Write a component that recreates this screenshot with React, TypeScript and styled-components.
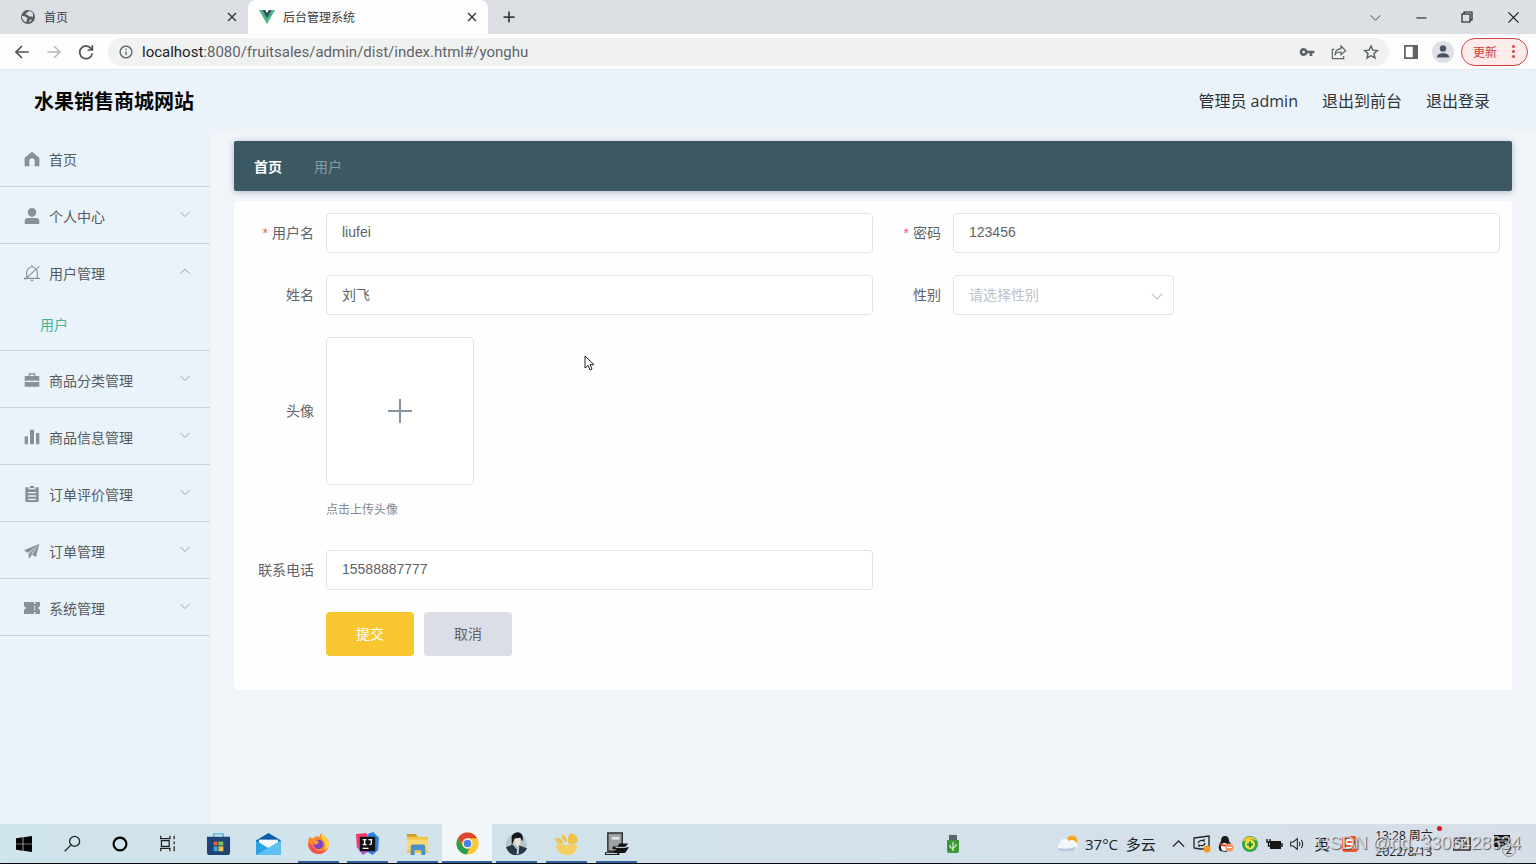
import React from "react";
import styled, { createGlobalStyle } from "styled-components";

const cjk = `"Noto Sans CJK SC", sans-serif`;

const GlobalStyle = createGlobalStyle`
  *, *::before, *::after { box-sizing: border-box; }
  body { margin: 0; font-family: "Open Sans", ${cjk}; font-size: 14px; color: #5f6368; }
  button, input, select { font: inherit; color: inherit; margin: 0; }
  a { color: inherit; text-decoration: none; }
  svg { display: block; flex: none; }
`;

const Page = styled.div`
  min-height: 100vh;
  display: flex;
  flex-direction: column;
  background: #f1f5fa;
`;

const IconButton = styled.button<{ $w?: number }>`
  width: ${(p) => p.$w ?? 32}px;
  height: 28px;
  padding: 0;
  border: 0;
  background: none;
  display: flex;
  align-items: center;
  justify-content: center;
  flex: none;
`;

/* ---------- browser ---------- */
const TabStrip = styled.div`
  height: 34px;
  display: flex;
  align-items: center;
  background: #dcdfe4;
  color: #3c4043;
`;

const Tab = styled.div<{ $active?: boolean }>`
  width: ${(p) => (p.$active ? 240 : 248)}px;
  height: 34px;
  padding: 0 0 0 ${(p) => (p.$active ? 11 : 20)}px;
  display: flex;
  align-items: center;
  gap: 8px;
  font-size: 12px;
  border-radius: 8px 8px 0 0;
  background: ${(p) => (p.$active ? "#fdfdfe" : "transparent")};
`;

const TabTitle = styled.span`
  flex: 1;
`;

const WindowControls = styled.div`
  margin-left: auto;
  display: flex;
`;

const Toolbar = styled.div`
  height: 36px;
  padding: 0 8px 0 6px;
  display: flex;
  align-items: center;
  background: #fdfdfe;
  border-bottom: 1px solid #e6e9ec;
`;

const AddressBar = styled.div`
  flex: 1;
  height: 28px;
  margin: 0 6px;
  padding: 0 2px 0 11px;
  display: flex;
  align-items: center;
  gap: 9px;
  border-radius: 14px;
  background: #f0f2f2;
  font-size: 15px;
`;

const Url = styled.div`
  flex: 1;
  font-family: Roboto, ${cjk};
  b { font-weight: 400; color: #202124; }
`;

const AddressActions = styled.div`
  display: flex;
`;

const UpdateButton = styled.button`
  width: 67px;
  height: 28px;
  margin-left: 2px;
  padding: 0 6px 0 11px;
  display: flex;
  align-items: center;
  justify-content: space-between;
  border: 1px solid #d2443c;
  border-radius: 14px;
  background: #fbeceb;
  color: #cf3a32;
  font-size: 12px;
`;

/* ---------- application ---------- */
const Header = styled.header`
  height: 60px;
  padding: 3px 46px 0 34px;
  display: flex;
  align-items: center;
  justify-content: space-between;
  background: #ebf3fa;
  color: #2f3338;
`;

const SiteTitle = styled.h1`
  margin: 0;
  font-size: 20px;
  line-height: 28px;
  color: #060606;
`;

const HeaderLinks = styled.nav`
  display: flex;
  gap: 24px;
  font-size: 16px;
  line-height: 24px;
  padding-bottom: 2px;
`;

const Body = styled.div`
  flex: 1;
  display: flex;
`;

const Sidebar = styled.nav`
  width: 210px;
  flex: none;
  background: #eaf3fa;
  color: #555a60;
`;

const MenuGroup = styled.div`
  border-bottom: 1px solid #c8d3df;
`;

const MenuItem = styled.a`
  height: 56px;
  padding: 2px 19px 0 24px;
  display: flex;
  align-items: center;
  gap: 9px;
`;

const MenuLabel = styled.span`
  flex: 1;
`;

const MenuArrow = styled.span`
  padding-bottom: 5px;
`;

const SubItem = styled.a`
  height: 50px;
  padding: 0 0 2px 40px;
  display: flex;
  align-items: center;
  color: #42b794;
`;

const Main = styled.main`
  position: relative;
  flex: 1;
  padding: 11px 24px;
`;

const Crumbs = styled.nav`
  height: 50px;
  padding: 0 20px;
  display: flex;
  align-items: center;
  gap: 32px;
  border-radius: 2px;
  background: #3b5863;
  box-shadow: 0 1px 6px rgba(60, 60, 90, 0.35);
  color: #8c9ba4;
  a { color: #fff; font-weight: 700; }
`;

const Panel = styled.form`
  margin-top: 10px;
  padding: 12px 12px 34px;
  border-radius: 4px;
  background: #fefefe;
  display: flex;
  flex-direction: column;
  gap: 22px;
  color: #606266;
`;

const Row = styled.div`
  display: grid;
  grid-template-columns: 1fr 1fr;
`;

const Field = styled.div`
  display: flex;
  align-items: flex-start;
`;

const Label = styled.label<{ $tall?: boolean }>`
  width: 80px;
  flex: none;
  padding-right: 12px;
  text-align: right;
  line-height: ${(p) => (p.$tall ? 148 : 40)}px;
`;

const Star = styled.span`
  margin-right: 4px;
  font-family: "Liberation Sans", sans-serif;
  color: #e5606c;
`;

const TextInput = styled.input`
  flex: 1;
  min-width: 0;
  height: 40px;
  padding: 0 15px 2px;
  border: 1px solid #dfe2e8;
  border-radius: 4px;
  background: #fff;
  outline: none;
  font-family: "Liberation Sans", ${cjk};
`;

const SelectBox = styled.div`
  position: relative;
  width: 221px;
  svg { position: absolute; right: 10px; top: 14px; pointer-events: none; }
`;

const Select = styled.select`
  width: 100%;
  height: 40px;
  padding: 0 15px 2px;
  appearance: none;
  border: 1px solid #dfe2e8;
  border-radius: 4px;
  background: #fff;
  color: #bcc1ca;
`;

const UploadButton = styled.button`
  width: 148px;
  height: 148px;
  padding: 0;
  display: flex;
  align-items: center;
  justify-content: center;
  border: 1px solid #dfe2e8;
  border-radius: 4px;
  background: #fff;
`;

const Tip = styled.div`
  margin-top: 7px;
  font-size: 12px;
  line-height: 36px;
  color: #84898f;
`;

const Actions = styled.div`
  padding-left: 80px;
  display: flex;
  gap: 10px;
`;

const ActionButton = styled.button<{ $primary?: boolean }>`
  width: 88px;
  height: 44px;
  padding: 0 0 2px;
  border: 0;
  border-radius: 4px;
  background: ${(p) => (p.$primary ? "#f9c62f" : "#dbdee6")};
  color: ${(p) => (p.$primary ? "#fff" : "#606266")};
`;

const Pointer = styled.svg`
  position: absolute;
  left: 374px;
  top: 225px;
`;

/* ---------- taskbar ---------- */
const Taskbar = styled.footer`
  position: relative;
  height: 40px;
  display: flex;
  align-items: stretch;
  border-bottom: 1px solid #0b0b0b;
  background: linear-gradient(90deg, #d0e4ec, #d3e1ea 60%, #d7dee8);
  color: #1d2227;
`;

const TaskButton = styled.button`
  width: 48px;
  padding: 0;
  border: 0;
  background: none;
  display: flex;
  align-items: center;
  justify-content: center;
`;

const Apps = styled.div`
  width: 447px;
  margin-left: 2px;
  display: flex;
`;

const AppButton = styled.button<{ $open?: boolean; $active?: boolean }>`
  flex: 1;
  padding: 0;
  border: 0;
  display: flex;
  flex-direction: column;
  align-items: center;
  justify-content: space-between;
  background: ${(p) => (p.$active ? "#f0f6fa" : "none")};
  &::before { content: ""; height: 2px; }
  &::after {
    content: "";
    height: 2px;
    width: ${(p) => (p.$active ? "100%" : "41px")};
    background: ${(p) => (p.$open || p.$active ? "#2f629f" : "transparent")};
  }
`;

const Usb = styled.div`
  margin: 0 auto;
  padding-left: 208px;
  display: flex;
  align-items: center;
`;

const Tray = styled.div`
  width: 480px;
  display: flex;
  align-items: center;
  font-size: 15px;
`;

const Weather = styled.div`
  width: 110px;
  display: flex;
  align-items: center;
  gap: 7px;
  white-space: nowrap;
`;

const TrayIcon = styled.div<{ $w?: number }>`
  width: ${(p) => p.$w ?? 24}px;
  flex: none;
  display: flex;
  justify-content: center;
`;

const Clock = styled.div`
  width: 76px;
  flex: none;
  text-align: center;
  font-size: 12px;
  line-height: 16px;
  white-space: nowrap;
`;

const RedDot = styled.i`
  position: absolute;
  right: 94px;
  top: 2px;
  width: 5px;
  height: 5px;
  border-radius: 50%;
  background: #e5121c;
`;

const Watermark = styled.div`
  position: absolute;
  right: 15px;
  top: 7px;
  font-family: "Liberation Sans", sans-serif;
  font-size: 18px;
  line-height: 24px;
  white-space: nowrap;
  color: rgba(232, 236, 241, 0.8);
  text-shadow: 1px 1px 1px rgba(60, 60, 60, 0.8);
`;

/* ---------- icons ---------- */
type IconProps = { d: string; size?: number; w?: number; color?: string; fill?: boolean; box?: number };
const Icon = ({ d, size = 16, w = 2, color = "currentColor", fill, box = 24 }: IconProps) => (
  <svg width={size} height={size} viewBox={`0 0 ${box} ${box}`} fill={fill ? color : "none"} stroke={fill ? "none" : color} strokeWidth={w} fillRule="evenodd" aria-hidden="true">
    <path d={d} />
  </svg>
);

const CLOSE = "M4 4l16 16M20 4L4 20";
const DOWN = "M3 8l9 9 9-9";
const UP = "M3 17l9-9 9 9";

const GlobeIcon = () => (
  <svg width="16" height="16" viewBox="0 0 16 16" aria-hidden="true">
    <circle cx="8" cy="8" r="7" fill="#5a5f64" />
    <path d="M9 2c-1 2-3 1-3 3 0 1 2 1 3 2s3 0 4 1V4.500C12 3 10.500 2 9 2zM2 7c2 0 4 .5 5 2s-1 2-.5 4C4 13 2 10.500 2 7zM9 13c0-1 .5-2 2-2.500l1 .5c-1 1.200-2 1.800-3 2z" fill="#dcdfe4" />
  </svg>
);

const VueIcon = () => (
  <svg width="16" height="16" viewBox="0 0 16 16" aria-hidden="true">
    <path d="M0 1h3.200L8 9.400 12.800 1H16L8 15z" fill="#42b883" />
    <path d="M3.200 1h3L8 4.200 9.800 1h3L8 9.400z" fill="#35495e" />
  </svg>
);

const PersonCircle = () => (
  <svg width="22" height="22" viewBox="0 0 22 22" aria-hidden="true">
    <circle cx="11" cy="11" r="11" fill="#dee1e8" />
    <circle cx="11" cy="7.500" r="3.200" fill="#4d5563" />
    <path d="M4.800 16.500c0-3 3-4.300 6.200-4.300s6.200 1.300 6.200 4.300z" fill="#4d5563" />
  </svg>
);

const menuIcons: Record<string, React.ReactNode> = {
  home: <Icon fill color="#8a9097" d="M12 1L1 10v13h7v-8q0-4 4-4t4 4v8h7V10z" />,
  user: <Icon fill color="#8a9097" d="M12 0a6.500 6.500 0 1 1 0 13A6.500 6.500 0 0 1 12 0zM1 24v-4q0-5 5-5h12q5 0 5 5v4z" />,
  bell: <Icon w={1.7} color="#8a9097" d="M0 20h24M4 20v-9a8 8 0 0 1 16 0v9M10 23h4M12 0v3M1 22L23 2" />,
  bag: <Icon fill color="#8a9097" d="M7 6V2h10v4h6v7H1V6zm2 0h6V4H9zM1 15h22v7H1z" />,
  bars: <Icon fill color="#8a9097" d="M1 11h5v12H1zM9 1h6v22H9zM18 6h5v17h-5z" />,
  board: <Icon fill color="#8a9097" d="M2 2h5v3h10V2h5v22H2zM9 0h6v3H9zM6 9v2h12V9zm0 5v2h12v-2zm0 5v2h12v-2z" />,
  plane: <Icon fill color="#8a9097" d="M23 1L0 11l6 4zM23 1L7 16v8l4-5zM23 1L11 17l7 4z" />,
  ticket: <Icon fill color="#8a9097" d="M0 3h15v3h2V3h7v6l-3 3 3 3v6h-7v-3h-2v3H0v-6l3-3-3-3zm15 6v2h2V9zm0 4v2h2v-2z" />,
};

const menu = [
  { icon: "home", label: "首页", leaf: true },
  { icon: "user", label: "个人中心" },
  { icon: "bell", label: "用户管理", child: "用户" },
  { icon: "bag", label: "商品分类管理" },
  { icon: "bars", label: "商品信息管理" },
  { icon: "board", label: "订单评价管理" },
  { icon: "plane", label: "订单管理" },
  { icon: "ticket", label: "系统管理" },
];

const Glyph = ({ children }: { children: React.ReactNode }) => (
  <svg width="25" height="25" viewBox="0 0 26 26" aria-hidden="true">{children}</svg>
);

const apps: { name: string; open?: boolean; active?: boolean; art: React.ReactNode }[] = [
  {
    name: "Store",
    art: (
      <>
        <path d="M8 7V3h10v4" fill="none" stroke="#4eb5e6" strokeWidth="1.500" />
        <path d="M1 6h24v16q0 3-3 3H4q-3 0-3-3z" fill="#1d4677" />
        <path d="M8 11h4v4H8z" fill="#e8603c" /><path d="M13 11h5v4h-5z" fill="#8cc152" />
        <path d="M8 16h4v5H8z" fill="#36a9e1" /><path d="M13 16h5v5h-5z" fill="#f6c445" />
      </>
    ),
  },
  {
    name: "Mail",
    art: (
      <>
        <path d="M0 10L13 2l13 8v4H0z" fill="#0e5ca8" /><path d="M3 9h20v8H3z" fill="#f4f9fd" />
        <path d="M0 10l13 8 13-8v15H0z" fill="#2ba2e6" /><path d="M0 25l26-15v15z" fill="#5cc0f2" />
      </>
    ),
  },
  {
    name: "Firefox",
    open: true,
    art: (
      <>
        <path d="M4 6l3 2c2-3 5-3 7-2 1-1 0-3 2-4 1 3 8 5 8 12A11 11 0 1 1 4 6z" fill="#fb8a2c" />
        <path d="M16 2c1 3 8 5 8 12-1 5-4 8-7 9 4-4 4-9 1-13-2-2-3-5-2-8z" fill="#ffd33e" />
        <path d="M2 13c0 6 5 11 11 11 4 0 8-2 10-6-6 5-14 4-16-3z" fill="#f4504e" />
        <circle cx="13" cy="14" r="5" fill="#7a45c4" /><path d="M8 11c3-3 6 0 5 2-2 0-2 2-4 1z" fill="#fb9a2c" />
      </>
    ),
  },
  {
    name: "IDE",
    open: true,
    art: (
      <>
        <path d="M1 3l11-1 3 12-13 4z" fill="#ec3d70" /><path d="M13 3l6-2 6 6-1 13-6 5-6-4z" fill="#2f82e0" />
        <path d="M2 17l8-4 5 8-7 4z" fill="#b05ad0" /><path d="M5 6h16v15H5z" fill="#111" />
        <path d="M8 9h4M10 9v5M8 14h4M14 9h4M17 9v4q0 1-2 1M8 18h6" stroke="#fff" strokeWidth="1.400" fill="none" />
      </>
    ),
  },
  {
    name: "Files",
    open: true,
    art: (
      <>
        <path d="M2 3h9l2 3h11v17H2z" fill="#f3c54b" /><path d="M2 3h9l2 3H2z" fill="#cf9d26" /><path d="M2 9h22v11H2z" fill="#fbd873" />
        <path d="M6 25v-9q0-2 2-2h11q2 0 2 2v9h-4v-5h-7v5z" fill="#4791c8" />
      </>
    ),
  },
  {
    name: "Chrome",
    active: true,
    art: (
      <>
        <circle cx="13" cy="13" r="11.500" fill="#f9c72f" />
        <path d="M3 7.500A11.500 11.500 0 0 1 23 7.500H13a5.500 5.500 0 0 0-5 8z" fill="#df4436" />
        <path d="M3 7.500L8 15.500a5.500 5.500 0 0 0 7 2.500L12 24.500A11.500 11.500 0 0 1 3 7.500z" fill="#2b9c54" />
        <circle cx="13" cy="13" r="5.200" fill="#fff" /><circle cx="13" cy="13" r="4" fill="#4285ee" />
      </>
    ),
  },
  {
    name: "Chat",
    open: true,
    art: (
      <>
        <circle cx="13" cy="14" r="11" fill="#b8c6cc" />
        <path d="M8 5q4-5 9-3 4 3 2 9l-2-4-6 1-3 7z" fill="#15181c" /><path d="M11 8l6-1v7l-3 2-3-3z" fill="#ecdcd2" />
        <path d="M2 17l7-3 4 5 3-4 8 3q-3 7-11 7T2 17z" fill="#26394a" /><path d="M14 16l2 0-1 8h-2z" fill="#c8d2d8" />
      </>
    ),
  },
  {
    name: "Navicat",
    open: true,
    art: (
      <>
        <path d="M1 8q6-2 9 4-7 3-9-4zM8 3q6 2 5 9-6-4-5-9zM17 2q8 2 8 8-3 5-10 3-2-5 2-11z" fill="#efc24c" />
        <path d="M2 15q5-3 11 0 5-3 11 0 0 9-9 10Q3 25 2 15z" fill="#f5cf62" />
      </>
    ),
  },
  {
    name: "Runner",
    open: true,
    art: (
      <>
        <path d="M4 2h15v19H4z" fill="#9aa0a5" stroke="#2a2d30" strokeWidth="1.500" /><path d="M8 6h8v3H8z" fill="#dfe5e9" />
        <path d="M1 22h9l3-3H9v-3h5l2-3h9l-3 4 4 0-4 6h-6v2H1z" fill="#131313" /><path d="M12 17h11M2 23.500h12" stroke="#dfe5e9" />
      </>
    ),
  },
];

export default function App() {
  return (
    <Page>
      <GlobalStyle />
      <TabStrip>
        <Tab>
          <GlobeIcon />
          <TabTitle>首页</TabTitle>
          <IconButton aria-label="关闭标签页"><Icon d={CLOSE} size={12} w={3} /></IconButton>
        </Tab>
        <Tab $active>
          <VueIcon />
          <TabTitle>后台管理系统</TabTitle>
          <IconButton aria-label="关闭标签页"><Icon d={CLOSE} size={12} w={3} /></IconButton>
        </Tab>
        <IconButton $w={42} aria-label="新标签页"><Icon d="M12 1v22M1 12h22" size={12} w={3.5} /></IconButton>
        <WindowControls>
          <IconButton $w={46} aria-label="搜索标签页"><Icon d={DOWN} size={13} w={1.8} /></IconButton>
          <IconButton $w={46} aria-label="最小化"><Icon d="M1 13h22" size={11} w={2.2} color="#111" /></IconButton>
          <IconButton $w={46} aria-label="还原"><Icon d="M2 6h16v16H2zM6 6V2h16v16h-4" size={12} w={2.2} color="#111" /></IconButton>
          <IconButton $w={46} aria-label="关闭"><Icon d="M1 1l22 22M23 1L1 23" size={11} w={2.4} color="#111" /></IconButton>
        </WindowControls>
      </TabStrip>

      <Toolbar>
        <IconButton aria-label="后退"><Icon d="M22 12H3M12 3l-9 9 9 9" w={2.6} color="#50555a" /></IconButton>
        <IconButton aria-label="前进"><Icon d="M2 12h19M12 3l9 9-9 9" w={2.2} color="#b4b8bb" /></IconButton>
        <IconButton aria-label="刷新"><Icon d="M20.500 8A9.500 9.500 0 1 0 21.500 14M21.500 2v7h-7" w={2.6} color="#50555a" /></IconButton>
        <AddressBar>
          <Icon d="M12 2a10 10 0 1 0 .01 0zM12 11v6M12 6.500v2.500" w={2.2} size={14} />
          <Url><b>localhost</b>:8080/fruitsales/admin/dist/index.html#/yonghu</Url>
          <AddressActions>
            <IconButton aria-label="密码"><Icon fill d="M7 6a6 6 0 1 0 5.700 8H16v4h4v-4h3v-4H12.700A6 6 0 0 0 7 6zm0 4a2 2 0 1 1 0 4 2 2 0 0 1 0-4z" /></IconButton>
            <IconButton aria-label="分享"><Icon d="M5 8H2v14h17v-4M15 3l7 7-7 6v-4c-5 0-8 1-9 5 0-6 3-10 9-10z" w={1.800} /></IconButton>
            <IconButton aria-label="收藏"><Icon d="M12 3l2.800 6.200 6.700.7-5 4.500 1.400 6.600L12 17.600 6.100 21l1.400-6.600-5-4.500 6.700-.7z" w={2.200} /></IconButton>
          </AddressActions>
        </AddressBar>
        <IconButton aria-label="侧边栏"><Icon fill d="M0 0h24v24H0zm3 3v18h12V3z" size={14} /></IconButton>
        <IconButton aria-label="个人资料"><PersonCircle /></IconButton>
        <UpdateButton>
          更新
          <Icon fill d="M10 2h4v4h-4zM10 10h4v4h-4zM10 18h4v4h-4z" size={15} />
        </UpdateButton>
      </Toolbar>

      <Header>
        <SiteTitle>水果销售商城网站</SiteTitle>
        <HeaderLinks>
          <span>管理员 admin</span>
          <a href="#front">退出到前台</a>
          <a href="#logout">退出登录</a>
        </HeaderLinks>
      </Header>

      <Body>
        <Sidebar>
          {menu.map((m) => (
            <MenuGroup key={m.label}>
              <MenuItem href="#menu">
                {menuIcons[m.icon]}
                <MenuLabel>{m.label}</MenuLabel>
                {!m.leaf && (
                  <MenuArrow><Icon d={m.child ? UP : DOWN} size={12} w={1.8} color="#92989f" /></MenuArrow>
                )}
              </MenuItem>
              {m.child && <SubItem href="#yonghu">{m.child}</SubItem>}
            </MenuGroup>
          ))}
        </Sidebar>

        <Main>
          <Crumbs>
            <a href="#home">首页</a>
            <span>用户</span>
          </Crumbs>
          <Panel onSubmit={(e) => e.preventDefault()}>
            <Row>
              <Field>
                <Label htmlFor="username"><Star>*</Star>用户名</Label>
                <TextInput id="username" defaultValue="liufei" />
              </Field>
              <Field>
                <Label htmlFor="password"><Star>*</Star>密码</Label>
                <TextInput id="password" defaultValue="123456" />
              </Field>
            </Row>
            <Row>
              <Field>
                <Label htmlFor="fullname">姓名</Label>
                <TextInput id="fullname" defaultValue="刘飞" />
              </Field>
              <Field>
                <Label htmlFor="gender">性别</Label>
                <SelectBox>
                  <Select id="gender" defaultValue="">
                    <option value="">请选择性别</option>
                    <option>男</option>
                    <option>女</option>
                  </Select>
                  <Icon d={DOWN} size={14} w={1.8} color="#bcc1ca" />
                </SelectBox>
              </Field>
            </Row>
            <Field>
              <Label $tall htmlFor="avatar">头像</Label>
              <div>
                <UploadButton id="avatar" type="button" aria-label="上传头像">
                  <Icon d="M12 0v24M0 12h24" size={24} w={2} color="#8793a0" />
                </UploadButton>
                <Tip>点击上传头像</Tip>
              </div>
            </Field>
            <Row>
              <Field>
                <Label htmlFor="phone">联系电话</Label>
                <TextInput id="phone" defaultValue="15588887777" />
              </Field>
            </Row>
            <Actions>
              <ActionButton $primary type="submit">提交</ActionButton>
              <ActionButton type="button">取消</ActionButton>
            </Actions>
          </Panel>
          <Pointer width="11" height="17" viewBox="0 0 11 17" aria-hidden="true">
            <path d="M1 1v12l3-2.500 2 4.500 2-1-2-4.300h4z" fill="#fff" stroke="#222" />
          </Pointer>
        </Main>
      </Body>

      <Taskbar>
        <TaskButton aria-label="开始"><Icon fill color="#050505" d="M0 3.500L10 2v9.500H0zM11 1.900L24 0v11.500H11zM0 12.500h10V22L0 20.500zM11 12.500h13V24l-13-1.900z" /></TaskButton>
        <TaskButton aria-label="搜索"><Icon color="#222" d="M15 2a7 7 0 1 0 .01 0zM10 14L1 23" w={1.8} size={17} /></TaskButton>
        <TaskButton aria-label="助手"><Icon color="#050505" d="M12 2.500a9.500 9.500 0 1 0 .01 0z" w={3.2} /></TaskButton>
        <TaskButton aria-label="任务视图"><Icon color="#222" d="M1 1v4h13V1M2 8h11v8H2zM1 23v-4h13v4M20 1v5M20 9v4M20 16v7" w={1.8} size={17} /></TaskButton>
        <Apps>
          {apps.map((a) => (
            <AppButton key={a.name} aria-label={a.name} $open={a.open} $active={a.active}>
              <Glyph>{a.art}</Glyph>
            </AppButton>
          ))}
        </Apps>
        <Usb>
          <svg width="12" height="18" viewBox="0 0 12 18" aria-hidden="true">
            <path d="M2 0h8v5H2z" fill="#5c6265" /><path d="M0 5h12v11q0 2-2 2H2q-2 0-2-2z" fill="#3b9a35" />
            <path d="M6 16V7M3 10v2l3 2M9 9v2l-3 2" stroke="#fff" fill="none" />
          </svg>
        </Usb>
        <Tray>
          <Weather>
            <svg width="22" height="18" viewBox="0 0 22 18" aria-hidden="true">
              <circle cx="16" cy="6" r="5.500" fill="#f5a623" />
              <path d="M4 15a4 4 0 0 1 0-7 5 5 0 0 1 9-2 4 4 0 0 1 6 9z" fill="#f3f7fc" />
              <path d="M2 13q8 2 18-1-1 4-4 4H5q-2 0-3-3z" fill="#b4c6e2" />
            </svg>
            <span>37°C&nbsp; 多云</span>
          </Weather>
          <TrayIcon><Icon d={UP} size={15} w={2} /></TrayIcon>
          <TrayIcon>
            <svg width="18" height="18" viewBox="0 0 18 18" fill="none" aria-hidden="true">
              <path d="M1 3l15-2v13l-9 0-6-1z" stroke="#222" strokeWidth="1.300" /><path d="M5 8q2-4 6-2V4M12 8q-1 4-6 2v2" stroke="#222" strokeWidth="1.300" />
              <circle cx="14" cy="14" r="3.500" fill="#f39a1c" />
            </svg>
          </TrayIcon>
          <TrayIcon>
            <svg width="16" height="18" viewBox="0 0 16 18" aria-hidden="true">
              <path d="M3 6q0-5 4-5t4 5q4 4 2 8l-5 3-6-1q-3-4 1-10z" fill="#191919" /><ellipse cx="6.500" cy="12" rx="3.500" ry="4" fill="#fff" />
              <path d="M2 8q5 3 10 0v2q-5 3-10 0z" fill="#e23b2e" /><circle cx="11.500" cy="12.500" r="4" fill="#f3935f" /><path d="M9 12h5v1H9z" fill="#fff" />
            </svg>
          </TrayIcon>
          <TrayIcon>
            <svg width="16" height="16" viewBox="0 0 16 16" aria-hidden="true">
              <circle cx="8" cy="8" r="8" fill="#2fa84a" /><path d="M1 5a8 8 0 0 1 14 0q-4-3-8-1T1 5z" fill="#f5c92a" />
              <circle cx="8" cy="8.500" r="5" fill="#f7e14a" /><path d="M8 5.500v6M5 8.500h6" stroke="#218a3a" strokeWidth="2" />
            </svg>
          </TrayIcon>
          <TrayIcon>
            <svg width="17" height="12" viewBox="0 0 17 12" aria-hidden="true">
              <path d="M5 4h9v6H5z" fill="#151515" stroke="#151515" strokeWidth="2" /><path d="M16 5v4M1 1v3h3V1M2.500 4v4H5" stroke="#151515" strokeWidth="1.400" fill="none" />
            </svg>
          </TrayIcon>
          <TrayIcon><Icon color="#222" d="M1 9h4l6-5v16l-6-5H1zM14 9q2 3 0 6M17 6q4 6 0 12" w={1.6} /></TrayIcon>
          <TrayIcon>英</TrayIcon>
          <TrayIcon $w={32}>
            <svg width="16" height="16" viewBox="0 0 16 16" aria-hidden="true">
              <rect width="16" height="16" rx="3" fill="#ee5a2c" /><path d="M12 4H6q-2 0-2 2t2 2h4q2 0 2 2t-2 2H4" stroke="#fff" strokeWidth="2" fill="none" />
            </svg>
          </TrayIcon>
          <Clock>13:28 周六<br />2022/8/13</Clock>
          <TrayIcon $w={40}><Icon color="#333" d="M1 4h22v16H1zM5 8h6M5 12h3M14 8l5 4-5 4z" w={1.8} size={18} /></TrayIcon>
          <TrayIcon $w={44}>
            <svg width="24" height="26" viewBox="0 0 24 26" aria-hidden="true">
              <path d="M2 4h16v12H8l-3 3v-3H2z" fill="#111" /><path d="M5 7h10M5 10h10M5 13h7" stroke="#ccd" />
              <circle cx="17" cy="19" r="6.500" fill="#d4dbe2" stroke="#8f969c" />
              <text x="17" y="23" fontSize="11" textAnchor="middle" fill="#111">2</text>
            </svg>
          </TrayIcon>
        </Tray>
        <RedDot />
        <Watermark>CSDN @qq_3306428634</Watermark>
      </Taskbar>
    </Page>
  );
}
